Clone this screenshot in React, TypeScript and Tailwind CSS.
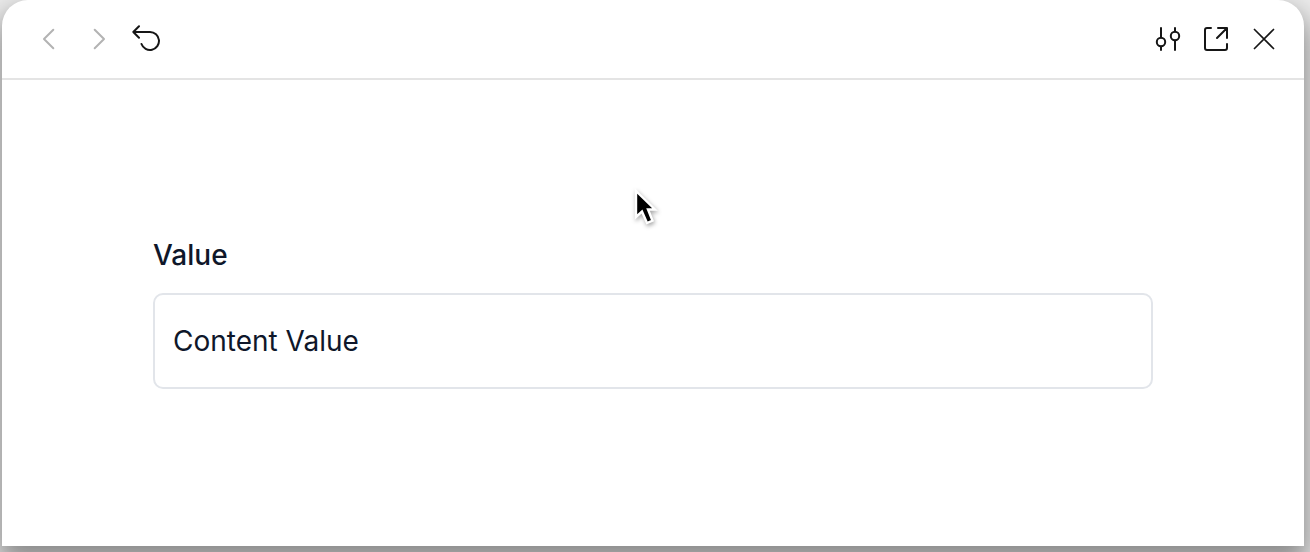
import { useState, type ReactNode } from "react";

function IconButton({
  label,
  disabled = false,
  children,
}: {
  label: string;
  disabled?: boolean;
  children: ReactNode;
}) {
  return (
    <button
      type="button"
      aria-label={label}
      disabled={disabled}
      className="size-8 shrink-0 text-[#161616] disabled:text-[#b3b3b3]"
    >
      <svg
        viewBox="0 0 32 32"
        className="size-8"
        fill="none"
        stroke="currentColor"
        strokeWidth="2"
        strokeLinecap="round"
        strokeLinejoin="round"
        aria-hidden="true"
      >
        {children}
      </svg>
    </button>
  );
}

function Toolbar() {
  return (
    <header className="flex h-20 items-center justify-between border-b-2 border-[#e4e4e4] pr-6 pl-[30px]">
      <nav className="flex gap-[18px]" aria-label="History">
        <IconButton label="Back" disabled>
          <path d="M21.3 6.7 L12 16 L21.3 25.3" />
        </IconButton>
        <IconButton label="Forward" disabled>
          <path d="M12.7 6.7 L22 16 L12.7 25.3" />
        </IconButton>
        <IconButton label="Undo">
          <path d="M7 3.3 L1.3 9 L7 14.7 M1.3 9 H18 A9 9 0 1 1 9.5 21" />
        </IconButton>
      </nav>
      <div className="flex gap-4">
        <IconButton label="Settings">
          <path d="M9 5 V14.5 M9 23.5 V27 M23 5 V8.5 M23 17.5 V27" />
          <circle cx="9" cy="19" r="4.2" />
          <circle cx="23" cy="13" r="4.2" />
        </IconButton>
        <IconButton label="Open in new window">
          <path d="M11 5 H7 Q5 5 5 7 V25 Q5 27 7 27 H25 Q27 27 27 25 V21 M18 5 H27 V15 M17 15 L27 5" />
        </IconButton>
        <IconButton label="Close">
          <path d="M6.5 6.5 L25.5 25.5 M25.5 6.5 L6.5 25.5" strokeWidth="1.7" />
        </IconButton>
      </div>
    </header>
  );
}

function Pointer() {
  return (
    <svg
      viewBox="0 0 32 42"
      className="pointer-events-none absolute top-[186px] left-[630px] h-[42px] w-8 drop-shadow-[1px_2px_2px_rgba(0,0,0,0.35)]"
      aria-hidden="true"
    >
      <path
        d="M6 5 V31 L12 25.5 L17 37 L22.5 34.7 L18 23.5 H25 Z"
        fill="#000000"
        stroke="#ffffff"
        strokeWidth="2.4"
        strokeLinejoin="miter"
      />
    </svg>
  );
}

export default function App() {
  const [value, setValue] = useState("Content Value");

  return (
    <div className="relative flex min-h-screen flex-col overflow-hidden bg-[#ececec] pr-1.5 pb-1.5 pl-0.5 font-['Inter',sans-serif]">
      <div className="flex flex-1 flex-col rounded-t-[26px] bg-white shadow-[0_14px_28px_4px_rgba(0,0,0,0.42)]">
        <Toolbar />
        <main className="flex flex-col gap-[22px] px-[151px] pt-[159px] text-[28px] leading-8 text-[#0f172a]">
          <label htmlFor="content-value" className="font-medium">
            Value
          </label>
          <input
            id="content-value"
            type="text"
            value={value}
            onChange={(event) => setValue(event.target.value)}
            className="h-24 w-full rounded-[10px] border-2 border-[#e2e5ea] bg-white px-[18px] outline-none focus:border-slate-400"
          />
        </main>
      </div>
      <Pointer />
    </div>
  );
}
